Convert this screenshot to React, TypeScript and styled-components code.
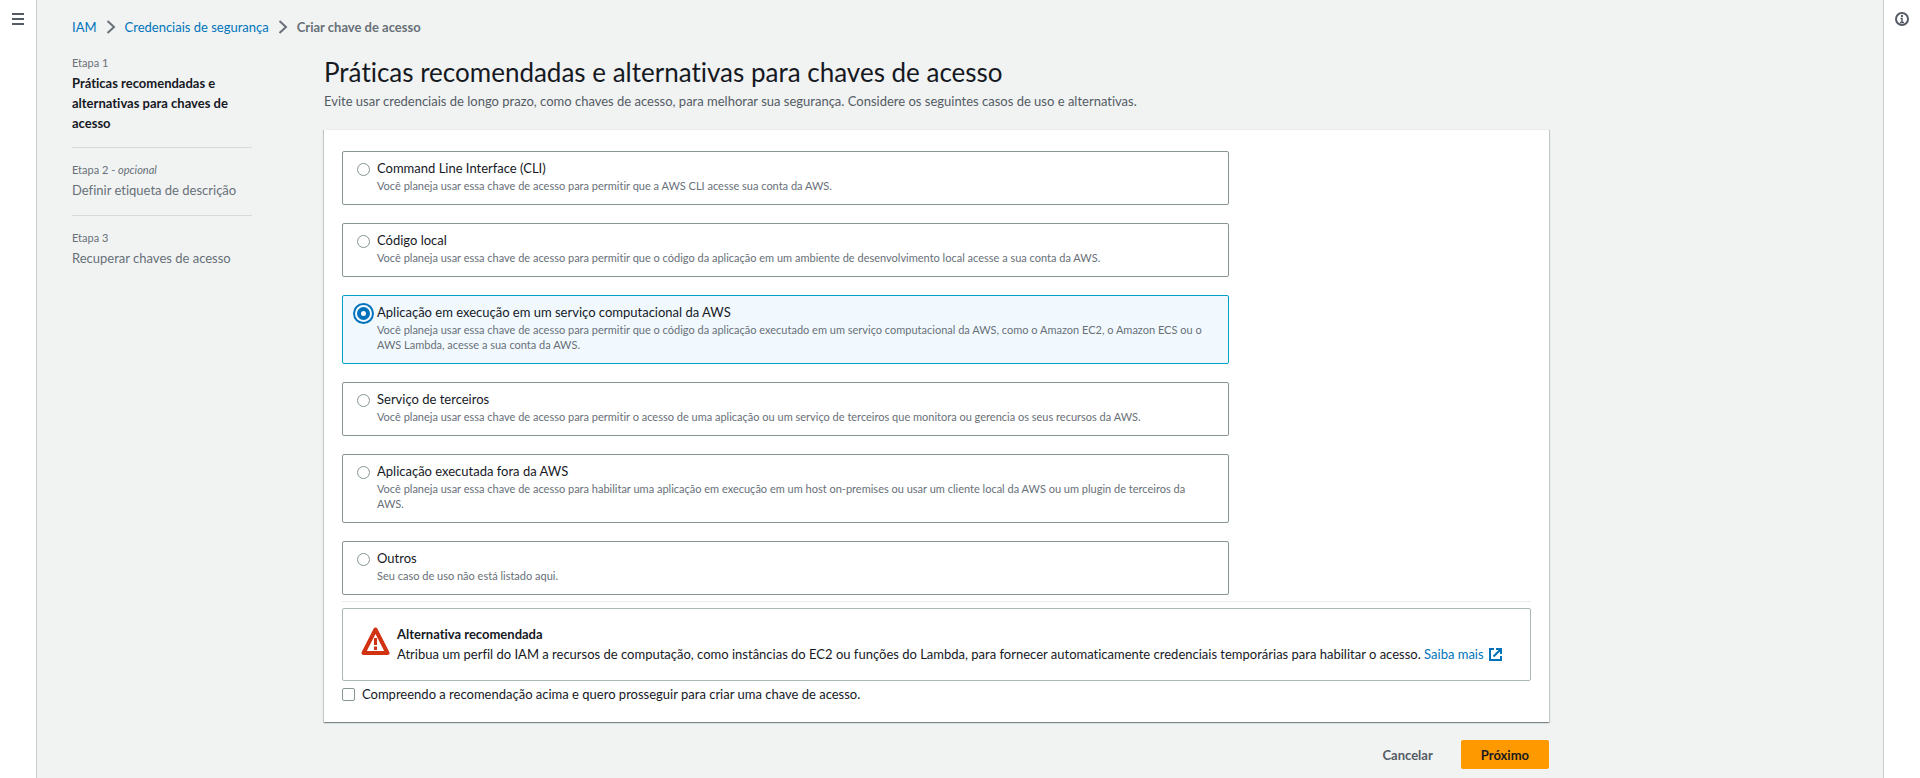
import React, { useState } from 'react';
import styled, { createGlobalStyle, css } from 'styled-components';

const GlobalStyle = createGlobalStyle`
  *, *::before, *::after { box-sizing: border-box; }
  body {
    margin: 0;
    background: #f1f3f3;
    color: #16191f;
    font-family: Lato, "Noto Sans", sans-serif;
    font-size: 13px;
    font-variant-ligatures: none;
    line-height: 20px;
  }
  h1, h2, p, ol, fieldset { margin: 0; padding: 0; }
  ol { list-style: none; }
`;

const Shell = styled.div`
  display: grid;
  grid-template-columns: 37px minmax(0, 1fr) 37px;
  min-height: 100vh;
`;

const Rail = styled.aside<{ $side: 'left' | 'right' }>`
  display: flex;
  justify-content: center;
  align-items: flex-start;
  padding-top: 8px;
  background: #fff;
  ${({ $side }) =>
    $side === 'left'
      ? css`border-right: 1px solid #c6cccd;`
      : css`border-left: 1px solid #c6cccd;`}
`;

const IconButton = styled.button`
  display: flex;
  align-items: center;
  justify-content: center;
  width: 22px;
  height: 22px;
  padding: 0;
  border: 0;
  background: none;
  color: #545b64;
  cursor: pointer;
`;

const Main = styled.main`
  padding: 17px 35px 8px;
`;

const Breadcrumbs = styled.ol`
  display: flex;
  align-items: center;
  gap: 9px;
  color: #687078;
`;

const Crumb = styled.li`
  display: flex;
  align-items: center;
  gap: 9px;
`;

const CurrentCrumb = styled.span`
  font-weight: 700;
`;

const Link = styled.a`
  color: #0073bb;
  text-decoration: none;
  &:hover { text-decoration: underline; }
`;

const Columns = styled.div`
  display: grid;
  grid-template-columns: 180px minmax(0, 1fr);
  column-gap: 72px;
  align-items: start;
  max-width: 1477px;
  margin-top: 18px;
`;

const Step = styled.li`
  display: flex;
  flex-direction: column;
  gap: 2px;
  padding: 14px 0 15px;
  color: #687078;
  &:first-child { padding: 0 0 14px; }
  & + & { border-top: 1px solid #d5dbdb; }
`;

const StepLabel = styled.small`
  font-size: 11px;
  line-height: 16px;
`;

const StepTitle = styled.span<{ $active?: boolean }>`
  ${({ $active }) => $active && css`
    color: #16191f;
    font-weight: 700;
  `}
`;

const Title = styled.h1`
  font-size: 26px;
  line-height: 32px;
  font-weight: 400;
`;

const Subtitle = styled.p`
  margin-top: 3px;
  color: #545b64;
`;

const Heading = styled.header`
  padding: 1px 0 18px;
`;

const Panel = styled.section`
  padding: 21px 18px 18px;
  border-top: 1px solid #eaeded;
  background: #fff;
  box-shadow:
    0 1px 1px 0 rgba(0, 28, 36, 0.3),
    1px 1px 1px 0 rgba(0, 28, 36, 0.15),
    -1px 1px 1px 0 rgba(0, 28, 36, 0.15);
`;

const OptionGrid = styled.div`
  display: grid;
  grid-template-columns: repeat(4, minmax(0, 1fr));
  column-gap: 18px;
`;

const Options = styled.fieldset`
  grid-column: span 3;
  display: flex;
  flex-direction: column;
  gap: 18px;
  min-width: 0;
  border: 0;
`;

const Option = styled.label<{ $selected: boolean }>`
  display: grid;
  grid-template-columns: 13px minmax(0, 1fr);
  column-gap: 7px;
  padding: 6px 14px 11px;
  border: 1px solid ${({ $selected }) => ($selected ? '#00a1c9' : '#879596')};
  border-radius: 2px;
  background: ${({ $selected }) => ($selected ? '#f1f9ff' : '#fff')};
  cursor: pointer;
`;

const Radio = styled.input`
  appearance: none;
  width: 13px;
  height: 13px;
  margin: 5px 0 0;
  border: 1px solid #879596;
  border-radius: 50%;
  background: #fff;
  &:checked {
    border: 4px solid #0073bb;
    box-shadow: 0 0 0 2px #f1f9ff, 0 0 0 4px #0073bb;
  }
`;

const OptionText = styled.span`
  display: flex;
  flex-direction: column;
`;

const OptionHint = styled.span`
  color: #687078;
  font-size: 11px;
  line-height: 15px;
`;

const Divider = styled.hr`
  height: 1px;
  margin: 6px 0;
  border: 0;
  background: #eaeded;
`;

const Alert = styled.div`
  display: flex;
  align-items: flex-start;
  gap: 7px;
  padding: 15px 18px 16px;
  border: 1px solid #aab7b8;
  border-radius: 2px;
`;

const AlertIcon = styled.svg`
  flex: none;
  margin-top: 3px;
`;

const AlertTitle = styled.h2`
  font-size: 13px;
  line-height: 20px;
  font-weight: 700;
`;

const ExternalIcon = styled.svg`
  margin-left: 5px;
  vertical-align: -2px;
`;

const Consent = styled.label`
  display: flex;
  align-items: center;
  gap: 7px;
  margin-top: 3px;
  cursor: pointer;
`;

const Checkbox = styled.input`
  appearance: none;
  width: 13px;
  height: 13px;
  margin: 0;
  border: 1px solid #879596;
  border-radius: 2px;
  background: #fff;
  &:checked { background: #0073bb; border-color: #0073bb; }
`;

const Actions = styled.footer`
  display: flex;
  justify-content: flex-end;
  gap: 8px;
  margin-top: 18px;
`;

const Button = styled.button<{ $primary?: boolean }>`
  height: 29px;
  padding: 0 20px;
  border: 0;
  border-radius: 2px;
  background: ${({ $primary }) => ($primary ? '#ff9900' : 'transparent')};
  color: ${({ $primary }) => ($primary ? '#16191f' : '#545b64')};
  font: inherit;
  font-weight: 700;
  cursor: pointer;
`;

const Chevron = () => (
  <svg width="10" height="14" viewBox="0 0 10 14" fill="none" stroke="#687078" strokeWidth="2" aria-hidden="true">
    <path d="M1.5 1L8 7L1.5 13" />
  </svg>
);

const options = [
  {
    id: 'cli',
    title: 'Command Line Interface (CLI)',
    hint: 'Você planeja usar essa chave de acesso para permitir que a AWS CLI acesse sua conta da AWS.',
  },
  {
    id: 'local',
    title: 'Código local',
    hint: 'Você planeja usar essa chave de acesso para permitir que o código da aplicação em um ambiente de desenvolvimento local acesse a sua conta da AWS.',
  },
  {
    id: 'compute',
    title: 'Aplicação em execução em um serviço computacional da AWS',
    hint: 'Você planeja usar essa chave de acesso para permitir que o código da aplicação executado em um serviço computacional da AWS, como o Amazon EC2, o Amazon ECS ou o AWS Lambda, acesse a sua conta da AWS.',
  },
  {
    id: 'third-party',
    title: 'Serviço de terceiros',
    hint: 'Você planeja usar essa chave de acesso para permitir o acesso de uma aplicação ou um serviço de terceiros que monitora ou gerencia os seus recursos da AWS.',
  },
  {
    id: 'outside',
    title: 'Aplicação executada fora da AWS',
    hint: 'Você planeja usar essa chave de acesso para habilitar uma aplicação em execução em um host on-premises ou usar um cliente local da AWS ou um plugin de terceiros da AWS.',
  },
  { id: 'other', title: 'Outros', hint: 'Seu caso de uso não está listado aqui.' },
];

export default function App() {
  const [selected, setSelected] = useState('compute');
  const [agreed, setAgreed] = useState(false);

  return (
    <>
      <GlobalStyle />
      <Shell>
        <Rail $side="left">
          <IconButton type="button" aria-label="Abrir navegação">
            <svg width="12" height="12" viewBox="0 0 12 12" fill="none" stroke="currentColor" strokeWidth="2">
              <path d="M0 1H12M0 6H12M0 11H12" />
            </svg>
          </IconButton>
        </Rail>

        <Main>
          <nav aria-label="Trilha">
            <Breadcrumbs>
              <Crumb><Link href="#iam">IAM</Link><Chevron /></Crumb>
              <Crumb><Link href="#credenciais">Credenciais de segurança</Link><Chevron /></Crumb>
              <Crumb><CurrentCrumb aria-current="page">Criar chave de acesso</CurrentCrumb></Crumb>
            </Breadcrumbs>
          </nav>

          <Columns>
            <nav aria-label="Etapas">
              <ol>
                <Step>
                  <StepLabel>Etapa 1</StepLabel>
                  <StepTitle $active>Práticas recomendadas e alternativas para chaves de acesso</StepTitle>
                </Step>
                <Step>
                  <StepLabel>Etapa 2 - <em>opcional</em></StepLabel>
                  <StepTitle>Definir etiqueta de descrição</StepTitle>
                </Step>
                <Step>
                  <StepLabel>Etapa 3</StepLabel>
                  <StepTitle>Recuperar chaves de acesso</StepTitle>
                </Step>
              </ol>
            </nav>

            <div>
              <Heading>
                <Title>Práticas recomendadas e alternativas para chaves de acesso</Title>
                <Subtitle>
                  Evite usar credenciais de longo prazo, como chaves de acesso, para melhorar sua segurança. Considere os
                  seguintes casos de uso e alternativas.
                </Subtitle>
              </Heading>

              <Panel>
                <OptionGrid>
                  <Options aria-label="Caso de uso">
                    {options.map(({ id, title, hint }) => (
                      <Option key={id} $selected={selected === id}>
                        <Radio
                          type="radio"
                          name="use-case"
                          value={id}
                          checked={selected === id}
                          onChange={() => setSelected(id)}
                        />
                        <OptionText>
                          <span>{title}</span>
                          <OptionHint>{hint}</OptionHint>
                        </OptionText>
                      </Option>
                    ))}
                  </Options>
                </OptionGrid>

                <Divider />

                <Alert>
                  <AlertIcon width="29" height="28" viewBox="0 0 29 28" fill="none" stroke="#d13212" aria-hidden="true">
                    <path d="M14.5 2.5L26.5 26H2.5Z" strokeWidth="4" strokeLinejoin="round" />
                    <path d="M14.5 11V18M14.5 19.5V23" strokeWidth="3" />
                  </AlertIcon>
                  <div>
                    <AlertTitle>Alternativa recomendada</AlertTitle>
                    <p>
                      Atribua um perfil do IAM a recursos de computação, como instâncias do EC2 ou funções do Lambda, para
                      fornecer automaticamente credenciais temporárias para habilitar o acesso.{' '}
                      <Link href="#saiba-mais">
                        Saiba mais
                        <ExternalIcon width="13" height="13" viewBox="0 0 13 13" fill="none" stroke="currentColor" strokeWidth="2" aria-hidden="true">
                          <path d="M5 1H1V12H12V8M7 1H12V6M12 1L4.5 8.5" />
                        </ExternalIcon>
                      </Link>
                    </p>
                  </div>
                </Alert>

                <Consent>
                  <Checkbox type="checkbox" checked={agreed} onChange={(e) => setAgreed(e.target.checked)} />
                  <span>Compreendo a recomendação acima e quero prosseguir para criar uma chave de acesso.</span>
                </Consent>
              </Panel>

              <Actions>
                <Button type="button">Cancelar</Button>
                <Button type="button" $primary>Próximo</Button>
              </Actions>
            </div>
          </Columns>
        </Main>

        <Rail $side="right">
          <IconButton type="button" aria-label="Informações">
            <svg width="14" height="14" viewBox="0 0 14 14" fill="none" stroke="currentColor">
              <circle cx="7" cy="7" r="6" strokeWidth="2" />
              <path d="M7 3V5" strokeWidth="2" />
              <path d="M5.5 6.5H7V10M5 10.5H9" strokeWidth="1.5" />
            </svg>
          </IconButton>
        </Rail>
      </Shell>
    </>
  );
}
